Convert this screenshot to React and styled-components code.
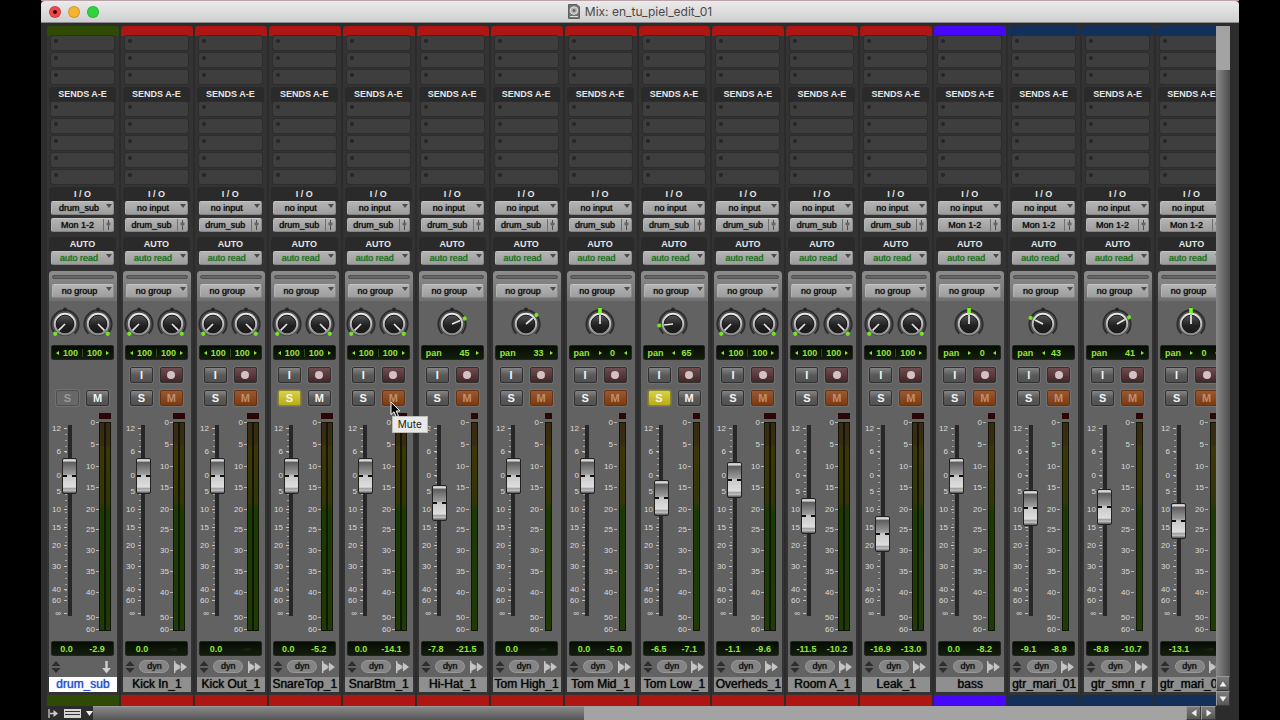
import React from "react";
import styled, { createGlobalStyle, css } from "styled-components";

const GREEN = "#2f4a05";
const RED = "#ad1613";
const VIOLET = "#4607fb";
const NAVY = "#12305a";

const SNARE = { color: RED, output: "drum_sub", mute: true };
const GUITAR = { color: NAVY, output: "Mon 1-2", mute: true };

// level is the fader travel above the bottom of its slot
const channels = [
  { name: "drum_sub", color: GREEN, input: "drum_sub", output: "Mon 1-2", level: 137, volume: "0.0", peak: "-2.9", aux: true, selected: true },
  { ...SNARE, name: "Kick In_1", level: 137, volume: "0.0" },
  { ...SNARE, name: "Kick Out_1", level: 137, volume: "0.0" },
  { ...SNARE, name: "SnareTop_1", level: 137, volume: "0.0", peak: "-5.2", mute: false, solo: true },
  { ...SNARE, name: "SnarBtm_1", level: 137, volume: "0.0", peak: "-14.1", tip: true },
  { ...SNARE, name: "Hi-Hat_1", level: 110, volume: "-7.8", peak: "-21.5", pan: 45 },
  { ...SNARE, name: "Tom High_1", level: 137, volume: "0.0", pan: 33 },
  { ...SNARE, name: "Tom Mid_1", level: 137, volume: "0.0", peak: "-5.0", pan: 0 },
  { ...SNARE, name: "Tom Low_1", level: 115, volume: "-6.5", peak: "-7.1", pan: -65, mute: false, solo: true },
  { ...SNARE, name: "Overheds_1", level: 133, volume: "-1.1", peak: "-9.6" },
  { ...SNARE, name: "Room A_1", level: 97, volume: "-11.5", peak: "-10.2" },
  { ...SNARE, name: "Leak_1", level: 79, volume: "-16.9", peak: "-13.0" },
  { ...GUITAR, name: "bass", color: VIOLET, level: 137, volume: "0.0", peak: "-8.2", pan: 0 },
  { ...GUITAR, name: "gtr_mari_01", level: 105, volume: "-9.1", peak: "-8.9", pan: -43 },
  { ...GUITAR, name: "gtr_smn_r", level: 106, volume: "-8.8", peak: "-10.7", pan: 41 },
  { ...GUITAR, name: "gtr_mari_02", level: 92, volume: "-13.1", pan: 0 },
];

const faderMarks = [
  ["12", 20], ["6", 43], ["0", 67], ["5", 83], ["10", 101], ["15", 119],
  ["20", 137], ["30", 158], ["40", 181], ["60", 192], ["∞", 205],
];

const meterMarks = [
  ["0", 14], ["5", 36], ["10", 58], ["15", 79], ["20", 101], ["25", 121],
  ["30", 142], ["35", 163], ["40", 184], ["50", 209], ["60", 221],
];

function Knob({ pan }) {
  const angle = Math.max(-135, Math.min(135, pan * 1.48));
  return (
    <svg width="33" height="36" viewBox="-16 -18 33 36" role="img" aria-label={`pan ${pan}`}>
      <path d="M-9.6 9.6A13.6 13.6 0 1 1 9.6 9.6" fill="none" stroke="#2c2c2c" strokeWidth="2" />
      <circle r="12.2" fill="#4a4a4a" />
      <circle r="11.2" fill="url(#knobRing)" />
      <circle r="8.8" fill="url(#knobFace)" stroke="#161616" strokeWidth="1" />
      <circle cy="-14.5" r="2" fill="#242424" />
      <g transform={`rotate(${angle})`}>
        <path d="M0 0V-9" stroke="#e6e6e6" strokeWidth="1.7" />
        {pan === 0 ? (
          <rect x="-1.8" y="-16" width="3.6" height="5.4" fill="#7dfb1e" />
        ) : (
          <circle cy="-13.8" r="2.1" fill="#78df2a" />
        )}
      </g>
    </svg>
  );
}

function PanReadout({ pan }) {
  if (pan === undefined) {
    return (
      <Readout>
        <Left />
        <span>100</span>
        <Divider />
        <span>100</span>
        <Right />
      </Readout>
    );
  }
  return (
    <PanGrid>
      <span>pan</span>
      {pan === 0 ? <Right /> : pan < 0 ? <Left /> : <i />}
      <PanValue>{Math.abs(pan)}</PanValue>
      {pan === 0 ? <Left /> : pan > 0 ? <Right /> : <i />}
    </PanGrid>
  );
}

function Scale({ stereo }) {
  const minor = [];
  for (let y = 20; y < 190; y += 6) minor.push(y);
  return (
    <ScaleSvg width="68" height="228" viewBox="0 0 68 228" aria-hidden="true">
      {minor.map((y) => (
        <path key={y} d={`M16 ${y + 0.5}H18`} stroke="#a4a4a4" />
      ))}
      {faderMarks.map(([label, y]) => (
        <g key={label}>
          <text x="12" y={y + 3} textAnchor="end">{label}</text>
          <path d={`M15 ${y + 0.5}H18`} stroke="#c4c4c4" />
        </g>
      ))}
      {meterMarks.map(([label, y]) => (
        <g key={label}>
          <text x="46" y={y + 3} textAnchor="end">{label}</text>
          <path d={`M47 ${y + 0.5}H50`} stroke="#b4b4b4" />
        </g>
      ))}
      {stereo ? (
        <g>
          <rect x="50" y="5" width="12" height="6" fill="#2c0507" />
          <rect x="50" y="14" width="12" height="209" fill="#101505" />
          <rect x="51" y="15" width="4" height="207" fill="url(#meterFill)" />
          <rect x="57" y="15" width="4" height="207" fill="url(#meterFill)" />
        </g>
      ) : (
        <g>
          <rect x="52" y="5" width="7" height="6" fill="#2c0507" />
          <rect x="52" y="14" width="7" height="209" fill="#101505" />
          <rect x="53" y="15" width="5" height="207" fill="url(#meterFill)" />
        </g>
      )}
    </ScaleSvg>
  );
}

function Menu({ label, value, green }) {
  return (
    <Drop>
      <DropSelect aria-label={label} defaultValue={value} $green={green}>
        <option>{value}</option>
      </DropSelect>
    </Drop>
  );
}

function Channel({ channel }) {
  const { name, color, input = "no input", output, aux, solo, mute, pan, tip } = channel;
  return (
    <Strip aria-label={name}>
      <Tab $color={color} />
      <Slots>
        {[1, 2, 3].map((n) => <Slot key={n} aria-label={`Insert ${n}`}><i /></Slot>)}
      </Slots>
      <SendsTitle>SENDS A-E</SendsTitle>
      <Slots>
        {[1, 2, 3, 4, 5].map((n) => <Slot key={n} aria-label={`Send ${n}`}><i /></Slot>)}
      </Slots>
      <Title>I / O</Title>
      <Routing>
        <Menu label="Input" value={input} />
        <Output>
          <span>{output}</span>
          <svg width="9" height="12" viewBox="0 0 9 12" aria-hidden="true">
            <path d="M4.5 1V11" stroke="#4c4c4c" />
            <path d="M2.5 3.5H6.5V5.5L4.5 7.5L2.5 5.5Z" fill="#666" />
          </svg>
        </Output>
      </Routing>
      <AutoTitle>AUTO</AutoTitle>
      <Routing>
        <Menu label="Automation" value="auto read" green />
      </Routing>
      <Panel>
        <Group>
          <GroupBar />
          <Menu label="Group" value="no group" />
        </Group>
        <Knobs>
          {pan === undefined ? (
            <>
              <Knob pan={-100} />
              <Knob pan={100} />
            </>
          ) : (
            <Knob pan={pan} />
          )}
        </Knobs>
        <PanReadout pan={pan} />
        <Keys>
          {!aux && (
            <>
              <Key aria-label="Input monitor">I</Key>
              <Key $kind="record" aria-label="Record"><Dot /></Key>
            </>
          )}
        </Keys>
        <Keys>
          <Key $kind={aux ? "dim" : solo ? "solo" : ""}>S</Key>
          <TipAnchor>
            <Key $kind={mute ? "mute" : ""}>M</Key>
            {tip && (
              <>
                <Cursor width="11" height="17" viewBox="0 0 11 17" aria-hidden="true">
                  <path d="M1 1V13.5L4 10.8L6.2 15.8L8.4 14.8L6.2 10H10Z" fill="#000" stroke="#fff" strokeWidth="1" />
                </Cursor>
                <Tip role="tooltip">Mute</Tip>
              </>
            )}
          </TipAnchor>
        </Keys>
        <FaderArea>
          <Scale stereo={pan === undefined} />
          <Fader type="range" min="0" max="185" defaultValue={channel.level} aria-label={`${name} volume`} />
        </FaderArea>
        <Levels>
          <span>{channel.volume}</span>
          {channel.peak ? <span>{channel.peak}</span> : <Silent>-∞</Silent>}
        </Levels>
        <Tools>
          <svg width="10" height="14" viewBox="0 0 10 14" aria-hidden="true">
            <path d="M5 1L9.5 6H0.5ZM0.5 8H9.5L5 13Z" fill="#2e2e2e" />
          </svg>
          {!aux && <Dyn>dyn</Dyn>}
          {aux ? (
            <svg width="13" height="14" viewBox="0 0 13 14" aria-hidden="true">
              <path d="M5.3 1H7.7V8H10.8L6.5 13.5L2.2 8H5.3Z" fill="#cfcfcf" />
            </svg>
          ) : (
            <svg width="13" height="12" viewBox="0 0 13 12" aria-hidden="true">
              <path d="M0 0H1.4V2L7 5.2V1.6L13 6L7 10.4V6.8L1.4 10V12H0Z" fill="#c4c4c4" />
              <path d="M6.3 2.2V9.8" stroke="#7a7a7a" strokeWidth="0.8" />
            </svg>
          )}
        </Tools>
        <Name $selected={channel.selected}>{name}</Name>
      </Panel>
      <Foot $color={color} />
    </Strip>
  );
}

function Defs() {
  return (
    <HiddenSvg width="0" height="0" aria-hidden="true">
      <defs>
        <linearGradient id="knobRing" x1="0" y1="0" x2="0" y2="1">
          <stop offset="0" stopColor="#ececec" />
          <stop offset="1" stopColor="#858585" />
        </linearGradient>
        <linearGradient id="knobFace" x1="0" y1="0" x2="0" y2="1">
          <stop offset="0" stopColor="#525252" />
          <stop offset="0.6" stopColor="#202020" />
          <stop offset="1" stopColor="#1a1a1a" />
        </linearGradient>
        <linearGradient id="meterFill" x1="0" y1="0" x2="0" y2="1">
          <stop offset="0" stopColor="#382a14" />
          <stop offset="0.1" stopColor="#382d10" />
          <stop offset="0.12" stopColor="#3d3706" />
          <stop offset="0.38" stopColor="#333606" />
          <stop offset="0.42" stopColor="#1b3905" />
          <stop offset="1" stopColor="#1f3a05" />
        </linearGradient>
      </defs>
    </HiddenSvg>
  );
}

function Arrow({ turn }) {
  return (
    <svg width="8" height="8" viewBox="-4 -4 8 8" aria-hidden="true">
      <path d="M0 -2.5L3.5 2.5H-3.5Z" fill="#f0f0f0" transform={`rotate(${turn})`} />
    </svg>
  );
}

export default function App() {
  return (
    <Desktop>
      <GlobalStyle />
      <Defs />
      <Window>
        <TitleBar>
          <Lights>
            <Light $color="#f0474c" aria-label="Close"><i /></Light>
            <Light $color="#f6b32f" aria-label="Minimize" />
            <Light $color="#2fd33c" aria-label="Zoom" />
          </Lights>
          <Heading>
            <svg width="12" height="15" viewBox="0 0 12 15" aria-hidden="true">
              <path d="M0.5 0.5H9L11.5 3V14.5H0.5Z" fill="#747474" stroke="#606060" />
              <circle cx="6" cy="6.5" r="3.8" fill="#b4b4b4" stroke="#e4e4e4" />
              <circle cx="6" cy="6.5" r="1.5" fill="#666" />
              <path d="M2 12.5H10" stroke="#ddd" />
            </svg>
            Mix: en_tu_piel_edit_01
          </Heading>
        </TitleBar>
        <Mixer>
          <Viewport>
            <Strips>
              {channels.map((channel) => <Channel key={channel.name} channel={channel} />)}
            </Strips>
          </Viewport>
          <VerticalBar>
            <VerticalThumb />
            <BarButton aria-label="Scroll up"><Arrow turn={0} /></BarButton>
            <BarButton aria-label="Scroll down"><Arrow turn={180} /></BarButton>
          </VerticalBar>
        </Mixer>
        <BottomBar>
          <ViewTools>
            <svg width="11" height="9" viewBox="0 0 11 9" aria-hidden="true">
              <path d="M1 0V9M2 4.5H8" stroke="#ccc" strokeWidth="1.3" />
              <path d="M5.5 1L10 4.5L5.5 8Z" fill="#ccc" />
            </svg>
            <svg width="17" height="9" viewBox="0 0 17 9" aria-hidden="true">
              <rect width="17" height="9" fill="#d6d6d6" />
              <path d="M1 2.5H16M1 5.5H16" stroke="#333" />
            </svg>
            <svg width="7" height="5" viewBox="0 0 7 5" aria-hidden="true">
              <path d="M0 0H7L3.5 5Z" fill="#eee" />
            </svg>
          </ViewTools>
          <Groove />
          <HorizontalThumb />
          <BarButton aria-label="Scroll left"><Arrow turn={-90} /></BarButton>
          <BarButton aria-label="Scroll right"><Arrow turn={90} /></BarButton>
        </BottomBar>
      </Window>
    </Desktop>
  );
}

const GlobalStyle = createGlobalStyle`
  * {
    box-sizing: border-box;
  }
  body {
    margin: 0;
    background: #000;
    overflow: hidden;
    font-family: "Liberation Sans", Arial, sans-serif;
    font-size: 9px;
  }
  button, select, input {
    margin: 0;
    padding: 0;
    border: 0;
    font: inherit;
    color: inherit;
  }
`;

const HiddenSvg = styled.svg`
  position: absolute;
`;

const Desktop = styled.div`
  padding: 0 41px;
`;

const Window = styled.main`
  border-top: 1px solid #b9a3a8;
  background: #2c2c2c;
`;

const TitleBar = styled.header`
  display: grid;
  grid-template-columns: 1fr auto 1fr;
  align-items: center;
  height: 22px;
  padding: 0 8px;
  border-radius: 4px 4px 0 0;
  border-bottom: 1px solid #8a8a8a;
  background: linear-gradient(#ebebeb, #cfcfcf);
`;

const Lights = styled.div`
  display: flex;
  gap: 7px;
`;

const Light = styled.button`
  display: grid;
  place-items: center;
  width: 12px;
  height: 12px;
  border: 1px solid rgba(0, 0, 0, 0.15);
  border-radius: 50%;
  background: ${(props) => props.$color};
  i {
    width: 4px;
    height: 4px;
    border-radius: 50%;
    background: #3a0508;
  }
`;

const Heading = styled.h1`
  display: flex;
  align-items: center;
  gap: 5px;
  margin: 0;
  font: 12px Inter, sans-serif;
  color: #484848;
`;

const Mixer = styled.div`
  display: flex;
  padding: 3px 9px 0 0;
`;

const Viewport = styled.div`
  flex: 1;
  min-width: 0;
  padding-left: 6px;
  overflow: hidden;
`;

// runs a little past the viewport, so the last strip is cut by the scroll bar
const Strips = styled.div`
  display: grid;
  grid-template-columns: repeat(16, minmax(0, 1fr));
  gap: 2px;
  margin-right: -12px;
`;

const Strip = styled.section`
  background: #333;
`;

const Tab = styled.div`
  height: 10px;
  border-radius: 4px 4px 0 0;
  background: ${(props) => props.$color};
`;

const Foot = styled.div`
  height: 11px;
  margin-top: 3px;
  background: ${(props) => props.$color};
`;

const Slots = styled.div`
  display: grid;
  gap: 3px;
  padding: 0 5px 3px 4px;
`;

const Slot = styled.button`
  display: flex;
  height: 14px;
  padding: 3px;
  border-radius: 2px;
  background: #3e3e3e;
  box-shadow: 0 0 0 1px #2d2d2d;
  i {
    width: 4px;
    height: 4px;
    border-radius: 50%;
    background: #262626;
  }
`;

const Title = styled.h2`
  height: 14px;
  margin: 0 3px 0 2px;
  border-radius: 4px 4px 0 0;
  background: #2a2a2a;
  color: #e6e6e6;
  font-size: 9px;
  font-weight: bold;
  line-height: 14px;
  text-align: center;
  white-space: nowrap;
`;

const SendsTitle = styled(Title)`
  height: 15px;
`;

const AutoTitle = styled(Title)`
  margin-top: 5px;
`;

const Routing = styled.div`
  display: grid;
  gap: 3px;
  padding: 0 5px 0 4px;
`;

const plate = css`
  height: 14px;
  border: 1px solid #c0c0c0;
  border-color: #c4c4c4 #8b8b8b #858585 #b4b4b4;
  border-radius: 2px;
  background: linear-gradient(#b4b4b4, #9d9d9d);
  color: #0c0c0c;
  line-height: 12px;
  text-shadow: 0 0 1px currentColor;
`;

const Drop = styled.div`
  display: grid;
  &::after {
    content: "";
    grid-area: 1 / 1;
    justify-self: end;
    width: 0;
    height: 0;
    margin: 3px 2px 0 0;
    border: 3px solid transparent;
    border-top: 4px solid #4b4b4b;
    border-bottom: 0;
    pointer-events: none;
  }
`;

const DropSelect = styled.select`
  ${plate}
  grid-area: 1 / 1;
  width: 100%;
  padding-right: 7px;
  appearance: none;
  text-align: center;
  text-align-last: center;
  color: ${(props) => (props.$green ? "#1c711a" : "#0c0c0c")};
`;

const Output = styled.button`
  ${plate}
  display: flex;
  span {
    flex: 1;
    border-right: 1px solid #6f6f6f;
  }
`;

const Panel = styled.div`
  margin: 6px 2px 0;
  border-radius: 4px 4px 0 0;
  background: #626262;
`;

const Group = styled.div`
  display: grid;
  gap: 4px;
  height: 30px;
  padding: 4px 3px 3px 3px;
  border-radius: 4px 4px 0 0;
  background: linear-gradient(#8c8c8c, #707070);
`;

const GroupBar = styled.div`
  height: 4px;
  border: 1px solid #505050;
  border-radius: 2px;
  background: #666;
`;

const Knobs = styled.div`
  display: flex;
  justify-content: center;
  padding: 5px 1px 3px 0;
`;

const screen = css`
  align-items: center;
  height: 15px;
  margin: 0 3px 0 2px;
  border: 1px solid #222;
  border-radius: 2px;
  background: linear-gradient(#050d03, #131d0d);
  color: #93e637;
  font-weight: bold;
`;

const Readout = styled.div`
  ${screen}
  display: flex;
  justify-content: space-between;
  padding: 0 4px;
`;

const PanGrid = styled.div`
  ${screen}
  display: grid;
  grid-template-columns: 1fr 3px 18px 3px;
  column-gap: 2px;
  padding: 0 4px;
`;

const PanValue = styled.span`
  text-align: center;
`;

const Left = styled.i`
  border: 2px solid transparent;
  border-right: 3px solid #93e637;
  border-left: 0;
`;

const Right = styled.i`
  border: 2px solid transparent;
  border-left: 3px solid #93e637;
  border-right: 0;
`;

const Divider = styled.i`
  width: 1px;
  height: 8px;
  background: #2e4a1c;
`;

const Levels = styled.div`
  ${screen}
  display: flex;
  justify-content: space-around;
  margin-top: 5px;
`;

const Silent = styled.span`
  color: #1d2b16;
`;

const Keys = styled.div`
  display: flex;
  gap: 7px;
  height: 16px;
  margin: 7px 0 0 7px;
`;

const keyKinds = {
  record: css`
    background: linear-gradient(#704d4f, #432528);
  `,
  solo: css`
    border-color: #8d862b;
    background: linear-gradient(#d9d248, #b8ad18);
  `,
  mute: css`
    border-color: #673313;
    background: linear-gradient(#9a5930, #7b3b12);
    color: #bd8e70;
  `,
  dim: css`
    border-color: #505050;
    background: #686868;
    color: #999;
  `,
};

const Key = styled.button`
  display: grid;
  place-items: center;
  width: 23px;
  height: 16px;
  border: 1px solid #303030;
  border-radius: 2px;
  box-shadow: 0 0 0 1px #707070;
  background: linear-gradient(#858585, #5a5a5a 50%, #505050);
  color: #f4f4f4;
  font-size: 11px;
  font-weight: bold;
  line-height: 14px;
  ${(props) => keyKinds[props.$kind]}
`;

const Dot = styled.i`
  width: 8px;
  height: 8px;
  border-radius: 50%;
  background: #d3c2c3;
`;

const TipAnchor = styled.div`
  position: relative;
`;

const Cursor = styled.svg`
  position: absolute;
  top: 11px;
  left: 8px;
  z-index: 3;
`;

const Tip = styled.div`
  position: absolute;
  top: 26px;
  left: 10px;
  z-index: 2;
  width: 36px;
  height: 17px;
  border: 1px solid #bdbdbd;
  background: #e9e9e9;
  color: #1c1c1c;
  font: 10px/15px Inter, sans-serif;
  text-align: center;
`;

const FaderArea = styled.div`
  display: grid;
  height: 228px;
  margin-top: 2px;
`;

const ScaleSvg = styled.svg`
  grid-area: 1 / 1;
  fill: #dadada;
  font-family: "Liberation Sans Narrow", "Liberation Sans", sans-serif;
  font-size: 8px;
`;

const Fader = styled.input`
  grid-area: 1 / 1;
  width: 15px;
  height: 221px;
  margin: 2px 0 0 13px;
  appearance: none;
  writing-mode: vertical-lr;
  direction: rtl;
  background: linear-gradient(#272727, #272727) center / 4px 191px no-repeat;
  &::-webkit-slider-thumb {
    appearance: none;
    width: 15px;
    height: 36px;
    border: 1px solid #222;
    border-radius: 2px;
    background:
      linear-gradient(#111, #111) left 16px / 4px 2px no-repeat,
      linear-gradient(#111, #111) right 16px / 4px 2px no-repeat,
      linear-gradient(
        #bdbdbd 0, #e2e2e2 2px, #5f5f5f 3px, #666 5px, #9b9b9b 15px,
        #c9c9c9 17px, #dedede 28px, #8f8f8f 30px, #d0d0d0 31px, #555 34px
      );
  }
`;

const Tools = styled.div`
  display: flex;
  align-items: center;
  justify-content: space-between;
  height: 21px;
  padding: 0 4px 0 2px;
`;

const Dyn = styled.button`
  width: 30px;
  height: 13px;
  border: 1px solid #999;
  border-radius: 7px;
  background: #858585;
  color: #111;
  line-height: 11px;
  text-shadow: 0 0 1px currentColor;
`;

const Name = styled.div`
  height: 15px;
  overflow: hidden;
  background: ${(props) => (props.$selected ? "#fff" : "#8f8f8f")};
  color: ${(props) => (props.$selected ? "#2450d8" : "#080808")};
  font-size: 12px;
  line-height: 15px;
  text-align: center;
  text-shadow: 0 0 1px currentColor;
  white-space: nowrap;
`;

const VerticalBar = styled.div`
  display: flex;
  flex-direction: column;
  flex: 0 0 14px;
  background: linear-gradient(90deg, #8a8a8a, #4c4c4c);
`;

const VerticalThumb = styled.div`
  height: 44px;
  margin-bottom: auto;
  background: #a3a3a3;
`;

const BarButton = styled.button`
  display: grid;
  flex: 0 0 15px;
  place-items: center;
  border: 1px solid #3a3a3a;
  border-color: #999 #3a3a3a #3a3a3a #999;
  background: linear-gradient(#7c7c7c, #565656);
`;

const BottomBar = styled.footer`
  display: flex;
  height: 14px;
  padding-right: 23px;
`;

const ViewTools = styled.div`
  display: flex;
  align-items: center;
  gap: 5px;
  flex: 0 0 51px;
  padding-left: 7px;
`;

const Groove = styled.div`
  flex: 491;
  border-top: 1px solid #999;
  background: linear-gradient(#888, #555);
`;

const HorizontalThumb = styled.div`
  flex: 603;
  background: #a3a3a3;
`;
